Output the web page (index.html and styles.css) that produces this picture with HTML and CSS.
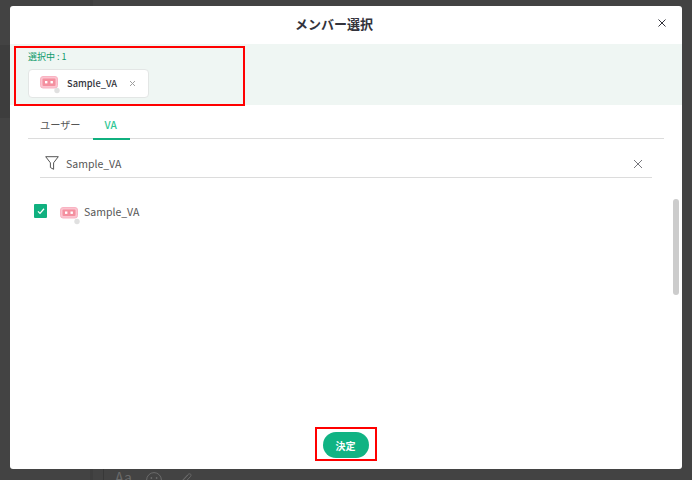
FILE: index.html
```html
<!DOCTYPE html>
<html lang="ja">
<head>
<meta charset="utf-8">
<title>メンバー選択</title>
<link rel="stylesheet" href="styles.css">
</head>
<body>
<div class="backdrop">
  <div class="bg-band"></div>
  <div class="bg-line bg-line-a"></div>
  <div class="bg-line bg-line-b"></div>
  <div class="bg-tools">
    <span class="bg-aa">Aa</span>
    <svg class="bg-icon" width="16" height="16" viewBox="0 0 16 16"><circle cx="8" cy="8" r="7.4" fill="none" stroke="#6a6a6a" stroke-width="1"/><circle cx="5.4" cy="6" r=".9" fill="#6a6a6a"/><circle cx="10.6" cy="6" r=".9" fill="#6a6a6a"/></svg>
    <svg class="bg-icon" width="16" height="16" viewBox="0 0 16 16"><path d="M2 13 12 2.500c2-1.800 4 .2 2.500 2L6 13.500c-1.500 1.500-3.500-.3-2-2L12 3" fill="none" stroke="#6a6a6a" stroke-width="1"/></svg>
  </div>
</div>
<main class="modal">
  <header class="modal-head">
    <h1 class="modal-title">メンバー選択</h1>
    <svg class="icon-close" width="10" height="10" viewBox="0 0 10 10"><path d="M1.500 1.500l7 7M8.500 1.500l-7 7" stroke="#33333b" stroke-width="1"/></svg>
  </header>
  <section class="selected">
    <div class="selected-count">選択中 : 1</div>
    <div class="chip">
      <svg class="va-icon" width="21" height="18" viewBox="0 0 21 18"><rect x=".5" y=".5" width="17" height="11.500" rx="2.500" fill="#fbc3cf" stroke="#f9b3c2"/><rect x="2.500" y="2.500" width="13" height="7.500" rx="1" fill="#f4909f"/><rect x="5" y="5" width="2.400" height="2.400" fill="#fff"/><rect x="10.500" y="5" width="2.400" height="2.400" fill="#fff"/><circle cx="17" cy="14.500" r="2.700" fill="#e0e0e0"/></svg>
      <span class="chip-name">Sample_VA</span>
      <svg class="chip-x" width="7" height="7" viewBox="0 0 7 7"><path d="M1 1l5 5M6 1l-5 5" stroke="#a0a0a0" stroke-width="1"/></svg>
    </div>
  </section>
  <nav class="tabs">
    <span class="tab">ユーザー</span>
    <span class="tab tab-active">VA</span>
  </nav>
  <div class="filter">
    <svg class="filter-icon" width="14" height="14" viewBox="0 0 14 14"><path d="M.7 .7h12.600L8.600 6.800v6.500L5.400 11.500V6.800z" fill="none" stroke="#555" stroke-width="1"/></svg>
    <span class="filter-text">Sample_VA</span>
    <svg class="filter-x" width="10" height="10" viewBox="0 0 10 10"><path d="M1 1l8 8M9 1l-8 8" stroke="#77777c" stroke-width="1"/></svg>
  </div>
  <div class="list">
    <div class="row">
      <span class="check"><svg width="8" height="8" viewBox="0 0 8 8"><path d="M1 4.400l2 2 4-4.600" fill="none" stroke="#fff" stroke-width="1.300"/></svg></span>
      <svg class="va-icon" width="21" height="18" viewBox="0 0 21 18"><rect x=".5" y=".5" width="17" height="10.500" rx="2.500" fill="#fbc3cf" stroke="#f9b3c2"/><rect x="2.500" y="2.500" width="13" height="6.500" rx="1" fill="#f4909f"/><rect x="5" y="4.500" width="2.400" height="2.400" fill="#fff"/><rect x="10.500" y="4.500" width="2.400" height="2.400" fill="#fff"/><circle cx="17" cy="14.500" r="2.700" fill="#e0e0e0"/></svg>
      <span class="row-name">Sample_VA</span>
    </div>
    <div class="scrollbar"></div>
  </div>
  <footer class="modal-foot">
    <button class="submit">決定</button>
  </footer>
  <div class="mark mark-selected"></div>
  <div class="mark mark-submit"></div>
</main>
</body>
</html>
```

FILE: styles.css
```css
* { box-sizing: border-box; }
html, body { margin: 0; height: 480px; overflow: hidden; }
body {
  position: relative;
  background: #434343;
  font-family: "Noto Sans CJK JP", "Noto Sans", sans-serif;
  color: #33333b;
}
.backdrop { position: absolute; inset: 0; }
.bg-band { position: absolute; left: 0; top: 45px; width: 10px; height: 73px; background: #3d3d3d; }
.bg-line { position: absolute; width: 1px; background: #383838; }
.bg-line-a { left: 90px; top: 0; height: 480px; width: 3px; background: #3e3e3e; }
.bg-line-b { left: 103px; top: 469px; height: 11px; }
.bg-tools {
  position: absolute; left: 115px; top: 468px;
  display: flex; align-items: flex-start; gap: 14px;
  color: #6a6a6a; font-size: 14px; line-height: 18px;
}
.bg-icon { margin-top: 4px; }
.modal {
  position: absolute; left: 10px; top: 6px;
  width: 672px; height: 463px;
  background: #fff; border-radius: 3px;
  display: flex; flex-direction: column;
}
.modal-head {
  height: 38px; flex: none;
  display: flex; align-items: center; justify-content: center;
  padding: 0 24px 2px 0;
  position: relative;
}
.modal-title { margin: 0; font-size: 13px; font-weight: 700; line-height: 18px; color: #33333b; }
.icon-close { position: absolute; right: 15px; top: 12px; }
.selected {
  height: 61px; flex: none;
  background: #eff6f3;
  padding: 6px 0 0 18px;
}
.selected-count { font-size: 9px; line-height: 13px; color: #0f9b6c; }
.chip {
  margin-top: 6px;
  width: 121px; height: 29px;
  background: #fff; border: 1px solid #e3e6e5; border-radius: 4px;
  display: flex; align-items: center;
  padding: 3px 0 0 11px;
}
.chip .va-icon { flex: none; }
.chip-name { margin: -5px 0 0 6px; font-size: 9.300px; font-weight: 500; color: #33333b; }
.chip-x { margin: -3px 0 0 12px; }
.tabs {
  margin: 6px 18px 0 18px;
  height: 28px; flex: none;
  border-bottom: 1px solid #dcdcdc;
  display: flex;
}
.tab {
  padding: 0 12px;
  font-size: 10.200px; line-height: 27px; color: #555;
  height: 28px;
}
.tab-active { color: #2ec795; border-bottom: 2px solid #10b07f; height: 29px; font-weight: 500; width: 37px; }
.filter {
  margin: 0 30px 0 30px;
  height: 39px; flex: none;
  border-bottom: 1px solid #dcdcdc;
  display: flex; align-items: center;
  padding: 10px 9px 0 5px;
}
.filter-x { margin-top: 2px; }
.filter-text { margin-left: 7px; font-size: 10.500px; color: #555; flex: 1; }
.list { position: relative; flex: 1; padding: 24px 0 0 24px; }
.row { display: flex; align-items: center; height: 20px; margin-top: -1px; }
.check {
  width: 13px; height: 14px; border-radius: 1px;
  background: #10b07f;
  display: flex; align-items: center; justify-content: center;
  margin-right: 13px;
}
.row .va-icon { margin-top: 9px; }
.row-name { margin-left: 3px; font-size: 10.500px; color: #555; }
.scrollbar {
  position: absolute; right: 3px; top: 21px;
  width: 6px; height: 96px; border-radius: 3px;
  background: #cccccc;
}
.modal-foot { height: 37px; flex: none; display: flex; justify-content: center; }
.submit {
  width: 46px; height: 26px;
  border: 0; border-radius: 13px;
  background: #10b383; color: #fff;
  font: 700 10px "Noto Sans CJK JP", sans-serif;
  padding: 0;
  margin-left: -1px;
}
.mark { position: absolute; border: 2px solid #f00; }
.mark-selected { left: 4px; top: 40px; width: 231px; height: 60px; }
.mark-submit { left: 305px; top: 421px; width: 62px; height: 34px; }
```
